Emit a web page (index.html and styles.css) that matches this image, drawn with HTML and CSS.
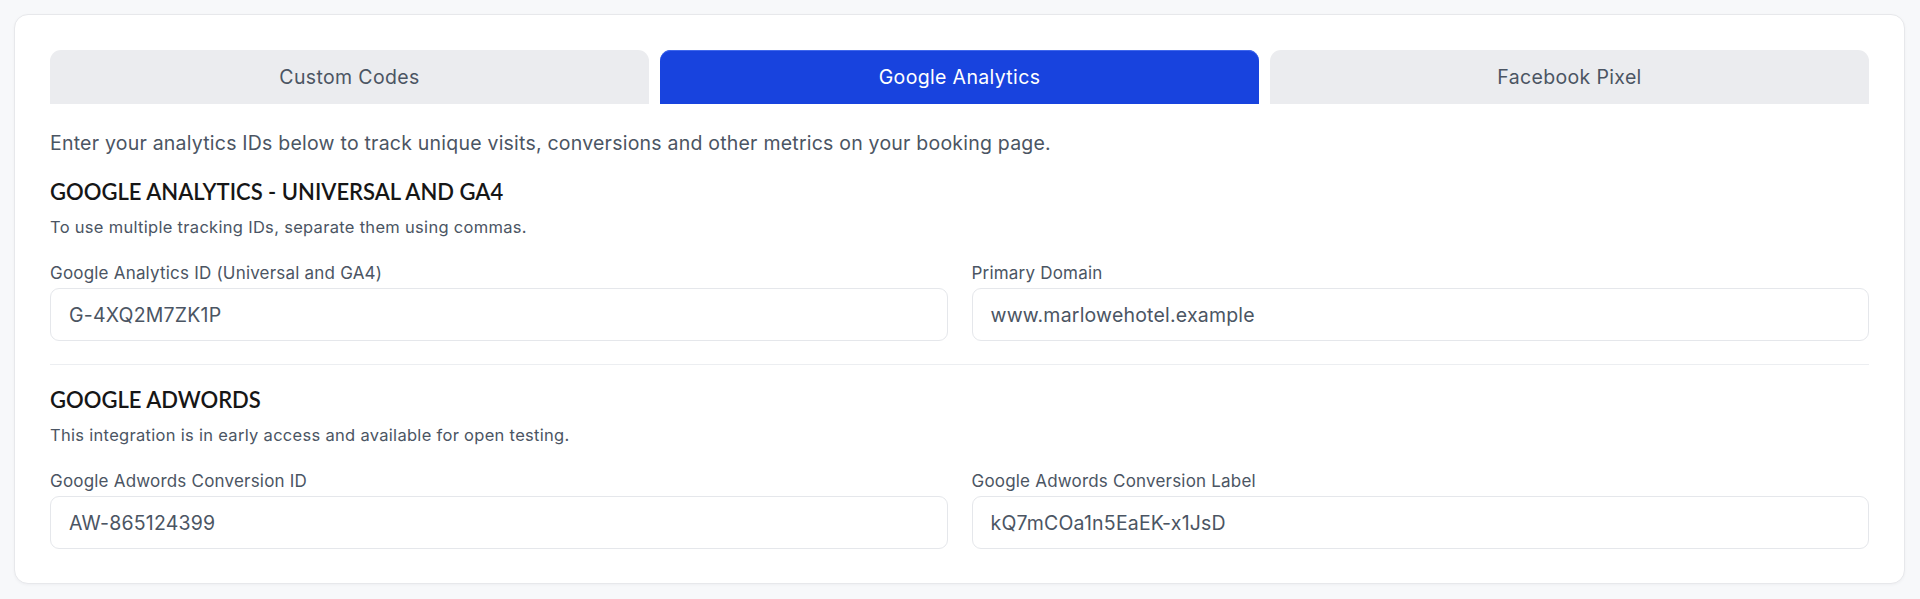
FILE: index.html
```html
<!DOCTYPE html>
<html lang="en">
<head>
<meta charset="utf-8">
<title>Analytics Settings</title>
<link rel="stylesheet" href="styles.css">
</head>
<body>
<div class="card">
  <div class="tabs">
    <div class="tab">Custom Codes</div>
    <div class="tab tab-active">Google Analytics</div>
    <div class="tab">Facebook Pixel</div>
  </div>
  <p class="intro">Enter your analytics IDs below to track unique visits, conversions and other metrics on your booking page.</p>

  <section class="section">
    <h2 class="section-title">GOOGLE ANALYTICS - UNIVERSAL AND GA4</h2>
    <p class="section-note">To use multiple tracking IDs, separate them using commas.</p>
    <div class="fields">
      <label class="field">
        <span class="field-label">Google Analytics ID (Universal and GA4)</span>
        <span class="input">G-4XQ2M7ZK1P</span>
      </label>
      <label class="field">
        <span class="field-label">Primary Domain</span>
        <span class="input">www.marlowehotel.example</span>
      </label>
    </div>
  </section>

  <div class="divider"></div>

  <section class="section">
    <h2 class="section-title">GOOGLE ADWORDS</h2>
    <p class="section-note">This integration is in early access and available for open testing.</p>
    <div class="fields">
      <label class="field">
        <span class="field-label">Google Adwords Conversion ID</span>
        <span class="input">AW-865124399</span>
      </label>
      <label class="field">
        <span class="field-label">Google Adwords Conversion Label</span>
        <span class="input">kQ7mCOa1n5EaEK-x1JsD</span>
      </label>
    </div>
  </section>
</div>
</body>
</html>
```

FILE: styles.css
```css
* { box-sizing: border-box; }

html, body {
  margin: 0;
  padding: 0;
}

body {
  background: #f7f8fa;
  padding: 14px 15px 14px 14px;
  font-family: Inter, "Liberation Sans", sans-serif;
  color: #4b5563;
}

.card {
  background: #ffffff;
  border: 1px solid #e7e8eb;
  border-radius: 14px;
  box-shadow: 0 1px 3px rgba(16, 24, 40, 0.04);
  padding: 35px 35px 34px 35px;
}

.tabs {
  display: grid;
  grid-template-columns: 1fr 1fr 1fr;
  gap: 11px;
}

.tab {
  height: 54px;
  display: flex;
  align-items: center;
  justify-content: center;
  background: #ebecef;
  color: #4b5563;
  border-radius: 11px 11px 0 0;
  font-size: 19.5px;
  font-weight: 400;
  letter-spacing: 0.35px;
}

.tab-active {
  background: #1843de;
  color: #ffffff;
  box-shadow: inset 0 1px 0 #3f67ec;
}

.intro {
  margin: 25px 0 0 0;
  font-size: 19.5px;
  line-height: 28px;
  letter-spacing: 0.22px;
  color: #4b5563;
}

.section-title {
  margin: 20px 0 0 0;
  font-family: Lato, "Noto Sans", sans-serif;
  font-weight: 600;
  font-size: 22px;
  line-height: 30px;
  color: #161616;
  letter-spacing: 0;
}

.section-note {
  margin: 8px 0 0 0;
  font-size: 16.5px;
  line-height: 24px;
  letter-spacing: 0.3px;
  color: #4b5563;
}

.fields {
  display: grid;
  grid-template-columns: 1fr 1fr;
  gap: 24px;
  margin-top: 22px;
}

.field {
  display: flex;
  flex-direction: column;
  gap: 3px;
}

.field-label {
  font-size: 17px;
  line-height: 24px;
  font-weight: 400;
  letter-spacing: 0.2px;
  color: #4b5563;
}

.input {
  height: 53px;
  display: flex;
  align-items: center;
  padding: 0 18px;
  border: 1px solid #e5e7eb;
  border-radius: 9px;
  font-size: 19.5px;
  letter-spacing: 0.2px;
  color: #4b5563;
  background: #ffffff;
}

.divider {
  height: 1px;
  background: #eceef1;
  margin-top: 23px;
}

.divider + .section .section-title {
  margin-top: 20px;
}
```
